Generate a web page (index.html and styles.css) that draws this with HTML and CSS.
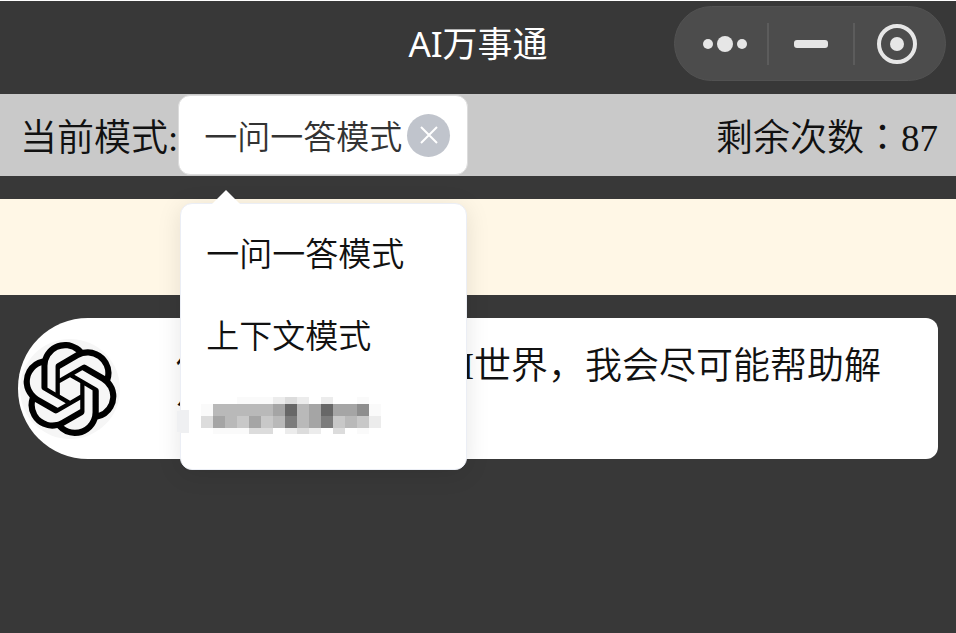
FILE: index.html
```html
<!DOCTYPE html>
<html lang="zh-CN">
<head>
    <meta charset="UTF-8">
    <meta name="viewport" content="width=device-width, initial-scale=1.0">
    <title>AI万事通</title>
    <link rel="stylesheet" href="styles.css">
</head>
<body>
    <header class="navbar">
        <h1 class="title">AI万事通</h1>
        <div class="capsule">
            <button type="button" aria-label="更多">
                <svg width="44" height="20" viewBox="0 0 44 20">
                    <circle cx="5" cy="10" r="5"/>
                    <circle cx="22" cy="10" r="8"/>
                    <circle cx="39" cy="10" r="5"/>
                </svg>
            </button>
            <button type="button" aria-label="最小化">
                <svg width="34" height="8" viewBox="0 0 34 8">
                    <rect width="34" height="8" rx="3"/>
                </svg>
            </button>
            <button type="button" aria-label="关闭">
                <svg width="42" height="42" viewBox="0 0 42 42">
                    <circle class="ring" cx="21" cy="21" r="18"/>
                    <circle cx="21" cy="21" r="7"/>
                </svg>
            </button>
        </div>
    </header>

    <div class="mode-bar">
        <label for="mode">当前模式:</label>
        <div class="mode-select">
            <select id="mode">
                <option selected>一问一答模式</option>
                <option>上下文模式</option>
            </select>
            <button type="button" class="clear" aria-label="清除">
                <svg width="20" height="20" viewBox="0 0 20 20">
                    <path d="M2 2l16 16M18 2L2 18"/>
                </svg>
            </button>
            <div class="menu">
                <button type="button">一问一答模式</button>
                <button type="button">上下文模式</button>
                <button type="button" class="masked" aria-label="模式">
                    <!-- mosaic over the last mode -->
                    <svg width="204" height="38" viewBox="0 0 204 38" shape-rendering="crispEdges">
                        <path fill="#eff0f2" d="M12 13v23H6a11 11 0 0 1 0-23z"/>
                        <path fill="#fafafa" d="M60 0h36v7H60zM24 7h12v12H24zM180 0h12v7h-12zM192 7h12v12h-12zM36 31h36v6H36zM180 31h12v6h-12z"/>
                        <path fill="#ececec" d="M96 0h12v7H96zM120 0h12v7h-12zM144 0h12v7h-12zM192 19h12v12h-12zM108 31h12v6h-12zM132 31h12v6h-12z"/>
                        <path fill="#dcdcdc" d="M108 0h12v7h-12zM24 19h12v12H24zM72 31h24v6H72zM120 31h12v6h-12zM156 31h12v6h-12z"/>
                        <path fill="#c8c8c8" d="M60 19h12v12H60zM84 19h12v12H84zM156 19h12v12h-12zM180 19h12v12h-12z"/>
                        <path fill="#b9b9b9" d="M36 7h60v12H36zM120 7h12v12h-12zM48 19h12v12H48zM96 19h12v12H96zM120 19h12v12h-12zM168 19h12v12h-12z"/>
                        <path fill="#a5a5a5" d="M96 7h12v12H96zM132 7h12v12h-12zM156 7h24v12h-24zM36 19h12v12H36zM72 19h12v12H72zM132 19h12v12h-12z"/>
                        <path fill="#8e8e8e" d="M180 7h12v12h-12z"/>
                        <path fill="#7c7c7c" d="M108 19h12v12h-12zM144 19h12v12h-12z"/>
                        <path fill="#676767" d="M108 7h12v12h-12zM144 7h12v12h-12z"/>
                    </svg>
                </button>
            </div>
        </div>
        <p class="remaining">剩余次数<span class="colon" lang="zh-TW">：</span>87</p>
    </div>

    <div class="notice"></div>

    <main class="chat">
        <div class="message">
            <div class="avatar">
                <svg width="94" height="94" viewBox="0 0 24 24">
                    <path d="M22.2819 9.8211a5.9847 5.9847 0 0 0-.5157-4.9108 6.0462 6.0462 0 0 0-6.5098-2.9A6.0651 6.0651 0 0 0 4.9807 4.1818a5.9847 5.9847 0 0 0-3.9977 2.9 6.0462 6.0462 0 0 0 .7427 7.0966 5.98 5.98 0 0 0 .511 4.9107 6.051 6.051 0 0 0 6.5146 2.9001A5.9847 5.9847 0 0 0 13.2599 24a6.0557 6.0557 0 0 0 5.7718-4.2058 5.9894 5.9894 0 0 0 3.9977-2.9001 6.0557 6.0557 0 0 0-.7475-7.0729zm-9.022 12.6081a4.4755 4.4755 0 0 1-2.8764-1.0408l.1419-.0804 4.7783-2.7582a.7948.7948 0 0 0 .3927-.6813v-6.7369l2.02 1.1686a.071.071 0 0 1 .038.052v5.5826a4.504 4.504 0 0 1-4.4945 4.4944zm-9.6607-4.1254a4.4708 4.4708 0 0 1-.5346-3.0137l.142.0852 4.783 2.7582a.7712.7712 0 0 0 .7806 0l5.8428-3.3685v2.3324a.0804.0804 0 0 1-.0332.0615L9.74 19.9502a4.4992 4.4992 0 0 1-6.1408-1.6464zM2.3408 7.8956a4.485 4.485 0 0 1 2.3655-1.9728V11.6a.7664.7664 0 0 0 .3879.6765l5.8144 3.3543-2.0201 1.1685a.0757.0757 0 0 1-.071 0l-4.8303-2.7865A4.504 4.504 0 0 1 2.3408 7.872zm16.5963 3.8558L13.1038 8.364 15.1192 7.2a.0757.0757 0 0 1 .071 0l4.8303 2.7913a4.4944 4.4944 0 0 1-.6765 8.1042v-5.6772a.79.79 0 0 0-.407-.667zm2.0107-3.0231l-.142-.0852-4.7735-2.7818a.7759.7759 0 0 0-.7854 0L9.409 9.2297V6.8974a.0662.0662 0 0 1 .0284-.0615l4.8303-2.7866a4.4992 4.4992 0 0 1 6.6802 4.66zM8.3065 12.863l-2.02-1.1638a.0804.0804 0 0 1-.038-.0567V6.0742a4.4992 4.4992 0 0 1 7.3757-3.4537l-.142.0805L8.704 5.459a.7948.7948 0 0 0-.3927.6813zm1.0976-2.3654l2.602-1.4998 2.6069 1.4998v2.9994l-2.5974 1.4997-2.6067-1.4997Z"/>
                </svg>
            </div>
            <p>你好，欢迎来到AI世界，我会尽可能帮助解答。</p>
        </div>
    </main>
</body>
</html>
```

FILE: styles.css
```css
* {
    box-sizing: border-box;
}
body {
    margin: 0;
    min-height: 100vh;
    border-top: 1px solid #fff;
    background-color: #383838;
    color: #111;
    font-family: "Liberation Serif", "Noto Sans CJK SC", serif;
    font-size: 37px;
    font-weight: 350;
}
button {
    padding: 0;
    border: 0;
    background: none;
    font: inherit;
    color: inherit;
    cursor: pointer;
}
p {
    margin: 0;
}
.navbar {
    display: grid;
    grid-template-columns: 1fr auto 1fr;
    align-items: center;
    height: 93px;
    padding: 0 10px 8px;
}
.title {
    grid-column: 2;
    margin: 0;
    color: #fff;
    font-family: "Noto Sans", "Noto Sans CJK SC", sans-serif;
    font-size: 35px;
    font-weight: 400;
    line-height: 48px;
}
.capsule {
    display: flex;
    align-items: center;
    justify-self: end;
    width: 272px;
    height: 75px;
    padding: 0 6px 0 8px;
    border: 1px solid #525252;
    border-radius: 38px;
    background-color: #4c4c4c;
}
.capsule button {
    display: flex;
    flex: 1;
    align-items: center;
    justify-content: center;
    height: 42px;
}
.capsule button + button {
    border-left: 2px solid #5c5c5c;
}
.capsule svg {
    fill: #e6e6e6;
}
.capsule .ring {
    fill: none;
    stroke: #e6e6e6;
    stroke-width: 4;
}
.mode-bar {
    display: flex;
    align-items: center;
    height: 82px;
    padding: 0 18px 0 20px;
    background-color: #c9c9c9;
}
.mode-select {
    position: relative;
    display: flex;
    align-items: center;
    width: 290px;
    height: 80px;
    padding: 0 17px 0 25px;
    border: 1px solid #dcdcdc;
    border-radius: 12px;
    background-color: #fff;
    font-family: "Noto Sans CJK SC", sans-serif;
    font-size: 33px;
}
.mode-select select {
    flex: 1;
    min-width: 0;
    padding: 0;
    border: 0;
    appearance: none;
    background: none;
    color: #333;
    font: inherit;
}
.clear {
    display: flex;
    align-items: center;
    justify-content: center;
    width: 43px;
    height: 43px;
    border-radius: 50%;
    background-color: #c0c4cc;
}
.clear path {
    fill: none;
    stroke: #fff;
    stroke-width: 2;
}
.menu {
    position: absolute;
    z-index: 2;
    top: 107px;
    left: 1px;
    width: 287px;
    padding: 7px 0 12px;
    border: 1px solid #ebeef5;
    border-radius: 12px;
    background-color: #fff;
    box-shadow: 0 4px 24px rgba(0, 0, 0, 0.1);
}
.menu::before {
    content: "";
    position: absolute;
    top: -14px;
    left: 31px;
    border: 14px solid transparent;
    border-top: 0;
    border-bottom-color: #fff;
}
.menu button {
    display: block;
    width: 100%;
    height: 82px;
    padding: 0 25px;
    text-align: left;
}
.menu .masked {
    padding: 0;
}
.masked svg {
    display: block;
    margin-left: -4px;
}
.remaining {
    margin-left: auto;
}
.colon {
    font-family: "Noto Sans CJK TC", sans-serif;
}
.notice {
    height: 96px;
    margin-top: 23px;
    background-color: #fff7e6;
}
.chat {
    padding: 23px 18px;
}
.message {
    display: flex;
    align-items: center;
    min-height: 141px;
    padding: 20px 20px 20px 0;
    border-radius: 70px 12px 12px 70px;
    background-color: #fff;
    line-height: 48px;
}
.message p {
    padding-top: 5px;
}
.avatar {
    display: flex;
    flex: none;
    align-items: center;
    justify-content: center;
    width: 100px;
    height: 100px;
    margin: 0 56px 0 2px;
    border-radius: 50%;
    background-color: #f6f6f6;
}
```
